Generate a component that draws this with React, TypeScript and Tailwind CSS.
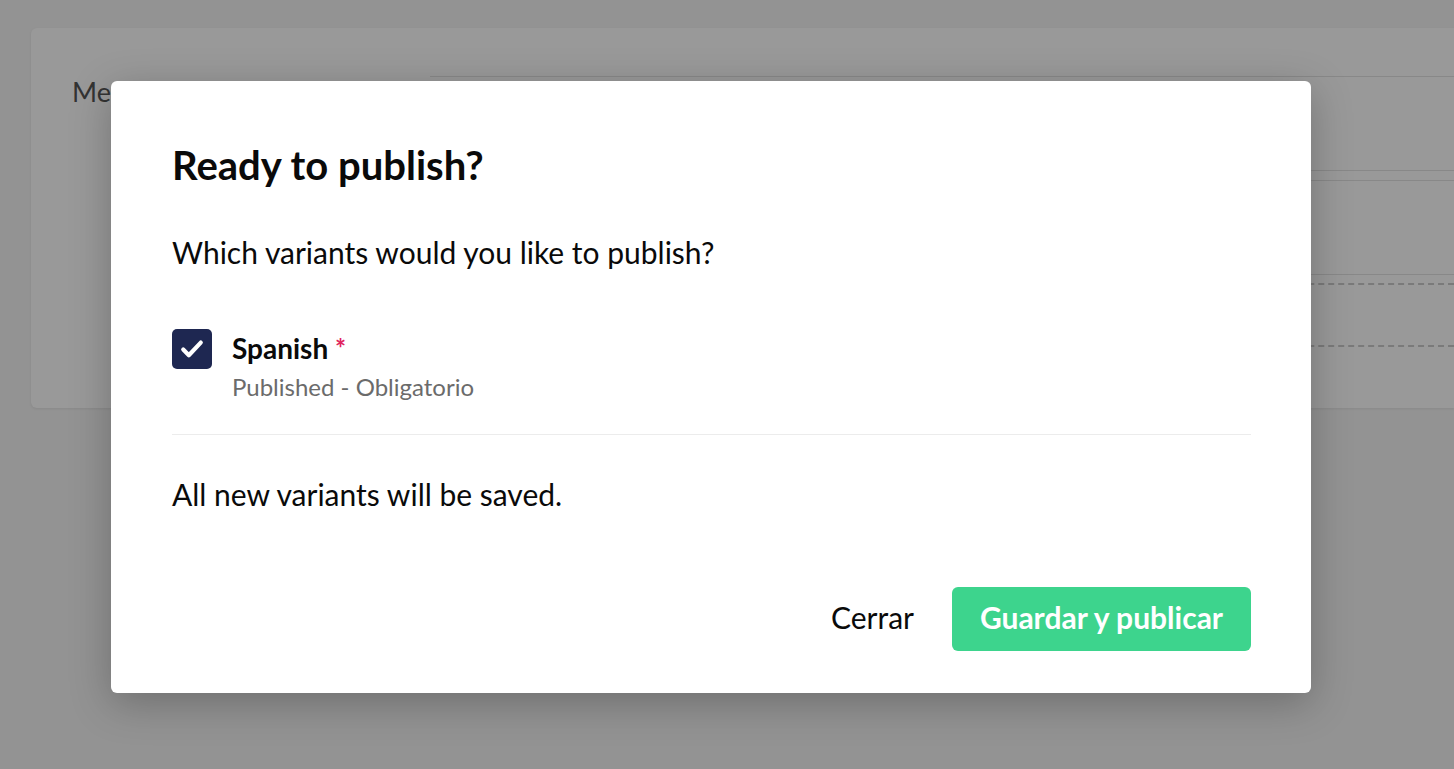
import React from "react";

export default function App() {
  return (
    <div
      className="relative w-[1454px] h-[769px] overflow-hidden bg-[#f5f5f5]"
      style={{ fontFamily: "Lato, 'Noto Sans', sans-serif" }}
    >
      {/* background page */}
      <div className="pt-[28px] pl-[31px]">
        <div className="flex h-[380px] rounded-l-[6px] bg-white shadow-[0_1px_3px_rgba(0,0,0,0.08)]">
          <div className="w-[399px] pl-[41px] pt-[44px] text-[27px] text-[#555]">Menú principal</div>
          <div className="flex-1 flex flex-col pt-[48px]">
            <div className="h-[94px] border-t border-[#e3e3e3]"></div>
            <div className="h-[10px] border-t border-[#e3e3e3]"></div>
            <div className="h-[94px] border-t border-[#e3e3e3]"></div>
            <div className="h-[9px] border-t border-[#e3e3e3]"></div>
            <div className="h-[62px] border-t-2 border-dashed border-[#ccc]"></div>
            <div className="border-t-2 border-dashed border-[#ccc]"></div>
          </div>
        </div>
      </div>

      {/* overlay */}
      <div className="absolute inset-0 bg-[rgba(0,0,0,0.4)]"></div>

      {/* modal */}
      <div className="absolute left-[111px] top-[81px] w-[1200px] h-[612px] rounded-[6px] bg-white shadow-[0_10px_40px_rgba(0,0,0,0.25)] pl-[61px] pr-[60px] pt-[58px] flex flex-col text-[#0a0a0a]">
        <h2 className="text-[40px] font-bold leading-[52px]">Ready to publish?</h2>
        <p className="mt-[43px] text-[30px] leading-[36px]">Which variants would you like to publish?</p>
        <div className="mt-[59px] flex gap-[20px]">
          <div className="w-[40px] h-[40px] rounded-[5px] bg-[#1e2751] flex items-center justify-center">
            <svg width="28" height="28" viewBox="0 0 24 24" fill="none">
              <path d="M4.5 12.5l4.8 4.8L19.5 6.5" stroke="white" strokeWidth="3.6" strokeLinecap="round" strokeLinejoin="round" />
            </svg>
          </div>
          <div className="flex flex-col">
            <div className="text-[28px] font-bold leading-[38px]">
              Spanish <span className="text-[#e0245e] align-top text-[26px] font-bold">*</span>
            </div>
            <div className="text-[24px] text-[#6b6b6b] leading-[40px]">Published - Obligatorio</div>
          </div>
        </div>
        <div className="mt-[27px] border-t border-[#ececec]"></div>
        <p className="mt-[41px] text-[30px] leading-[36px]">All new variants will be saved.</p>
        <div className="mt-auto mb-[42px] flex justify-end items-center gap-[38px]">
          <button className="text-[30px] leading-[36px] pb-[4px] text-[#0a0a0a]">Cerrar</button>
          <button className="w-[299px] h-[64px] rounded-[6px] bg-[#3dd48d] text-white text-[30px] leading-[36px] pb-[4px] font-bold">
            Guardar y publicar
          </button>
        </div>
      </div>
    </div>
  );
}
